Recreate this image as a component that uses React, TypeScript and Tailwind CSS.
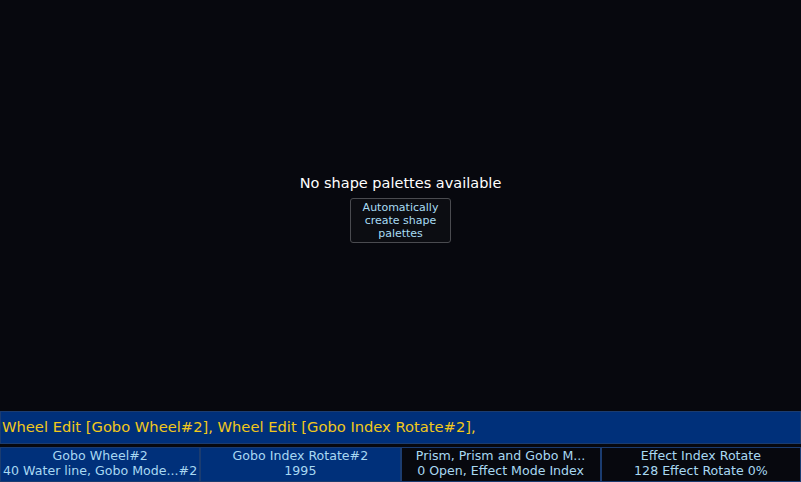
export default function App() {
  const cells = [
    { title: 'Gobo Wheel#2', value: '40 Water line, Gobo Mode...#2', active: true },
    { title: 'Gobo Index Rotate#2', value: '1995', active: true },
    { title: 'Prism, Prism and Gobo M...', value: '0 Open, Effect Mode Index', active: false },
    { title: 'Effect Index Rotate', value: '128 Effect Rotate 0%', active: false },
  ];

  return (
    <main
      className="w-[801px] h-[482px] bg-[#07080e] flex flex-col overflow-hidden"
      style={{ fontFamily: '"DejaVu Sans", Verdana, sans-serif' }}
    >
      <div className="flex-1 flex flex-col items-center justify-center pt-[6px]">
        <p className="text-[14.5px] leading-[18px] text-white">No shape palettes available</p>
        <button className="mt-[6px] w-[101px] h-[45px] rounded-[3px] border border-[#4a4b50] bg-[#0c0d12] text-[#a8dcf4] text-[11px] leading-[13px] flex items-center justify-center text-center px-1">
          Automatically create shape palettes
        </button>
      </div>

      <div className="h-[33px] mb-[3px] bg-[#00307a] border border-[#1b3c70] flex items-center px-[1px]">
        <span className="text-[14.7px] text-[#f2c81a] whitespace-nowrap">
          Wheel Edit [Gobo Wheel#2], Wheel Edit [Gobo Index Rotate#2],
        </span>
      </div>

      <div className="h-[35px] grid grid-cols-4">
        {cells.map((c) => (
          <div
            key={c.title}
            className={
              'flex flex-col items-center justify-center pb-[3px] border border-[#1b3c70] text-[12.6px] leading-[15px] text-[#a8d8f2] whitespace-nowrap overflow-hidden ' +
              (c.active ? 'bg-[#00307a]' : 'bg-[#07080e]')
            }
          >
            <span>{c.title}</span>
            <span>{c.value}</span>
          </div>
        ))}
      </div>
    </main>
  );
}
